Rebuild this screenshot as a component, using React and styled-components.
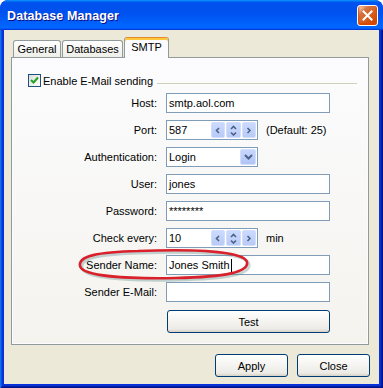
import React from "react";
import styled, { createGlobalStyle } from "styled-components";

const GlobalStyle = createGlobalStyle`
  html, body {
    margin: 0;
    padding: 0;
    background: #ffffff;
  }
  body {
    font-family: "Liberation Sans", Arial, sans-serif;
    font-size: 11px;
    color: #000;
  }
`;

const Window = styled.div`
  position: relative;
  width: 383px;
  height: 388px;
  display: flex;
  flex-direction: column;
  background: #0831d9;
  border-radius: 8px 8px 0 0;
  overflow: hidden;
`;

const TitleBar = styled.div`
  height: 30px;
  flex: none;
  display: flex;
  align-items: center;
  justify-content: space-between;
  padding: 0 5px 0 7px;
  background: linear-gradient(180deg, #0997ff, #0053ee 8%, #0050ee 40%, #0066ff 88%, #0066ff 93%, #005bff 95%, #003dd7 96%, #003dd7);
  border-radius: 8px 8px 0 0;
`;

const Title = styled.span`
  color: #fff;
  font-weight: bold;
  font-size: 12.5px;
  letter-spacing: 0.1px;
  text-shadow: 1px 1px #0f1089;
  padding-top: 1px;
`;

const CloseButton = styled.button`
  width: 21px;
  height: 21px;
  padding: 0;
  display: flex;
  align-items: center;
  justify-content: center;
  border: 1px solid #fff;
  border-radius: 3px;
  background: radial-gradient(circle at 90% 90%, #cc4600 0, #dc6527 55%, #cd7546 70%, #ffccb2 90%, #fff 100%);
  box-shadow: inset 0 -1px 2px 1px #da4600;
`;

const Frame = styled.div`
  flex: 1;
  display: flex;
  padding: 0 4px 4px;
  background: #0831d9;
  box-shadow: inset 1px 0 #166aee, inset -1px -1px #00138c, inset 2px 0 #0855dd, inset -2px -2px #001ea0;
`;

const Client = styled.div`
  flex: 1;
  display: flex;
  flex-direction: column;
  padding: 6px 10px 0 7px;
  background: #ece9d8;
`;

const TabStrip = styled.div`
  display: flex;
  align-items: flex-end;
  gap: 1px;
  padding-left: 2px;
  height: 21px;
`;

const Tab = styled.div`
  box-sizing: border-box;
  width: ${(p) => p.$w}px;
  height: ${(p) => (p.$active ? 21 : 17)}px;
  display: flex;
  align-items: center;
  justify-content: center;
  padding-bottom: ${(p) => (p.$active ? 2 : 0)}px;
  border: 1px solid #919b9c;
  border-bottom: none;
  border-radius: 3px 3px 0 0;
  background: ${(p) =>
    p.$active ? "#fcfcfe" : "linear-gradient(180deg, #fff, #fafaf9 26%, #f0f0ea 95%, #ecebe5)"};
  border-top-color: ${(p) => (p.$active ? "#e68b2c" : "#919b9c")};
  box-shadow: ${(p) => (p.$active ? "inset 0 2px #ffc73c" : "none")};
  margin-bottom: ${(p) => (p.$active ? -1 : 0)}px;
  z-index: ${(p) => (p.$active ? 1 : 0)};
`;

const Panel = styled.div`
  height: 288px;
  box-sizing: border-box;
  border: 1px solid #919b9c;
  background: linear-gradient(180deg, #fcfcfe, #f4f3ee);
  box-shadow: inset 1px 1px #fcfcfe, inset -1px -1px #fcfcfe;
  padding: 16px 11px 0 16px;
`;

const GroupHeader = styled.div`
  display: flex;
  align-items: center;
  height: 13px;
`;

const CheckBox = styled.span`
  box-sizing: border-box;
  width: 13px;
  height: 13px;
  flex: none;
  display: flex;
  align-items: center;
  justify-content: center;
  border: 1px solid #1c5180;
  background: linear-gradient(135deg, #dcdcd7, #fff);
`;

const GroupLabel = styled.span`
  margin-left: 2px;
  white-space: nowrap;
`;

const GroupLine = styled.span`
  flex: 1;
  height: 1px;
  margin: 6px 0 0 4px;
  background: #d0d0bf;
`;

const Form = styled.div`
  display: grid;
  grid-template-columns: 129px 164px;
  column-gap: 9px;
  row-gap: 7px;
  grid-auto-rows: 20px;
  margin-top: 6px;
`;

const Label = styled.label`
  display: flex;
  align-items: center;
  justify-content: flex-end;
  white-space: nowrap;
`;

const Field = styled.div`
  display: flex;
  align-items: center;
  gap: 8px;
`;

const TextBox = styled.div`
  box-sizing: border-box;
  width: ${(p) => p.$w || 164}px;
  height: 20px;
  position: relative;
  display: flex;
  align-items: center;
  padding-left: 2px;
  border: 1px solid #7f9db9;
  background: #fff;
  white-space: nowrap;
`;

const Caret = styled.span`
  display: inline-block;
  width: 1px;
  height: 13px;
  background: #000;
  margin-left: 1px;
`;

const SpinGroup = styled.div`
  position: absolute;
  right: 1px;
  top: 1px;
  bottom: 1px;
  display: flex;
  gap: 1px;
`;

const SpinButton = styled.span`
  box-sizing: border-box;
  width: ${(p) => p.$w || 14}px;
  display: flex;
  flex-direction: column;
  align-items: center;
  justify-content: center;
  gap: 1px;
  border: 1px solid #d2defb;
  border-radius: 2px;
  background: linear-gradient(180deg, #cbdaff, #b8cbf6);
`;

const DropButton = styled.span`
  position: absolute;
  right: 1px;
  top: 1px;
  bottom: 1px;
  width: 16px;
  box-sizing: border-box;
  display: flex;
  align-items: center;
  justify-content: center;
  border: 1px solid #d2defb;
  border-radius: 2px;
  background: linear-gradient(180deg, #c6d6fd, #b1c6f5);
`;

const Hint = styled.span`
  white-space: nowrap;
`;

const PushButton = styled.button`
  box-sizing: border-box;
  width: ${(p) => p.$w}px;
  height: 23px;
  padding: 0;
  font-family: "Liberation Sans", Arial, sans-serif;
  font-size: 11px;
  color: #000;
  border: 1px solid #003c74;
  border-radius: 3px;
  background: linear-gradient(180deg, #fff, #ecebe6 86%, #d6d0c5);
`;

const TestButton = styled(PushButton)`
  grid-column: 2;
  margin-top: 1px;
  margin-left: 1px;
`;

const Footer = styled.div`
  display: flex;
  justify-content: flex-end;
  gap: 9px;
  margin-top: 9px;
  margin-right: -1px;
`;

const Mark = styled.svg`
  position: absolute;
  left: 74px;
  top: 244px;
  pointer-events: none;
`;

const Chevron = ({ dir }) => {
  const d = {
    left: "M4 1 L1.5 3.5 L4 6",
    right: "M1.5 1 L4 3.5 L1.5 6",
    up: "M1 4 L3.5 1.5 L6 4",
    down: "M1 1.5 L3.5 4 L6 1.5",
  }[dir];
  const vertical = dir === "up" || dir === "down";
  return (
    <svg width={vertical ? 7 : 6} height={vertical ? 5 : 7} viewBox={vertical ? "0 0 7 5" : "0 0 6 7"}>
      <path d={d} fill="none" stroke="#4d6185" strokeWidth="1.6" />
    </svg>
  );
};

const Spinner = ({ value }) => (
  <TextBox $w={92}>
    {value}
    <SpinGroup>
      <SpinButton>
        <Chevron dir="left" />
      </SpinButton>
      <SpinButton $w={15}>
        <Chevron dir="up" />
        <Chevron dir="down" />
      </SpinButton>
      <SpinButton>
        <Chevron dir="right" />
      </SpinButton>
    </SpinGroup>
  </TextBox>
);

export default function App() {
  return (
    <>
      <GlobalStyle />
      <Window>
        <TitleBar>
          <Title>Database Manager</Title>
          <CloseButton aria-label="Close">
            <svg width="11" height="11" viewBox="0 0 11 11">
              <path d="M1.5 1.5 L9.5 9.5 M9.5 1.5 L1.5 9.5" stroke="#fff" strokeWidth="2" strokeLinecap="square" />
            </svg>
          </CloseButton>
        </TitleBar>
        <Frame>
          <Client>
            <TabStrip>
              <Tab $w={48}>General</Tab>
              <Tab $w={61}>Databases</Tab>
              <Tab $w={45} $active>
                SMTP
              </Tab>
            </TabStrip>
            <Panel>
              <GroupHeader>
                <CheckBox>
                  <svg width="9" height="9" viewBox="0 0 9 9">
                    <path d="M1 4 L3.5 6.5 L8 1.5" fill="none" stroke="#21a121" strokeWidth="2" />
                  </svg>
                </CheckBox>
                <GroupLabel>Enable E-Mail sending</GroupLabel>
                <GroupLine />
              </GroupHeader>
              <Form>
                <Label>Host:</Label>
                <Field>
                  <TextBox>smtp.aol.com</TextBox>
                </Field>
                <Label>Port:</Label>
                <Field>
                  <Spinner value="587" />
                  <Hint>(Default: 25)</Hint>
                </Field>
                <Label>Authentication:</Label>
                <Field>
                  <TextBox $w={92}>
                    Login
                    <DropButton>
                      <svg width="9" height="6" viewBox="0 0 9 6">
                        <path d="M1 1 L4.5 4.5 L8 1" fill="none" stroke="#4d6185" strokeWidth="2" />
                      </svg>
                    </DropButton>
                  </TextBox>
                </Field>
                <Label>User:</Label>
                <Field>
                  <TextBox>jones</TextBox>
                </Field>
                <Label>Password:</Label>
                <Field>
                  <TextBox>********</TextBox>
                </Field>
                <Label>Check every:</Label>
                <Field>
                  <Spinner value="10" />
                  <Hint>min</Hint>
                </Field>
                <Label>Sender Name:</Label>
                <Field>
                  <TextBox>
                    Jones Smith
                    <Caret />
                  </TextBox>
                </Field>
                <Label>Sender E-Mail:</Label>
                <Field>
                  <TextBox />
                </Field>
                <TestButton $w={163}>Test</TestButton>
              </Form>
            </Panel>
            <Footer>
              <PushButton $w={73}>Apply</PushButton>
              <PushButton $w={73}>Close</PushButton>
            </Footer>
          </Client>
        </Frame>
        <Mark width="182" height="42" viewBox="0 0 182 42">
          <path
            d="M64 7 C122 5 170 7 173 18 C175 28 152 33 102 34 C52 35 8 32 6 22 C4 12 24 8 64 7"
            fill="none"
            stroke="rgba(90,140,140,0.35)"
            strokeWidth="3"
            transform="translate(2 2)"
          />
          <path
            d="M64 7 C122 5 170 7 173 18 C175 28 152 33 102 34 C52 35 8 32 6 22 C4 12 24 8 64 7"
            fill="none"
            stroke="#d9202b"
            strokeWidth="2.6"
          />
        </Mark>
      </Window>
    </>
  );
}
